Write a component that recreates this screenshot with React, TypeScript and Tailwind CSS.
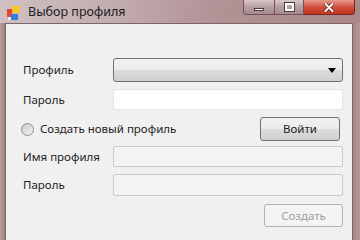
import { useState } from "react";

const AppIcon = () => (
  <svg width="16" height="16" viewBox="0 0 16 16">
    <rect x="1" y="4" width="5" height="8" fill="#e8412c" />
    <rect x="6" y="1" width="8" height="7" fill="#f7c52a" />
    <rect x="5" y="9" width="7" height="6" fill="#2f7fe0" />
    <rect x="2" y="12" width="3" height="3" fill="#ffffff" opacity="0.7" />
  </svg>
);

const TitleBar = () => (
  <div className="relative h-[23px] flex items-center bg-[linear-gradient(100deg,#cfc0c2_0%,#c2aeb1_30%,#b39296_60%,#a9878a_100%)]">
    <div className="ml-[6px] mt-[2px]">
      <AppIcon />
    </div>
    <span className="ml-[6px] mt-[1px] text-[12.5px] text-[#1c1c1c]">
      Выбор профиля
    </span>
    <div className="absolute right-[5px] top-0 flex h-[15px]">
      <div className="w-[32px] h-full border border-[#6f5456] border-t-0 rounded-bl-[4px] bg-[linear-gradient(#d9c8ca,#b59ea1_50%,#a58a8d)] flex items-center justify-center">
        <div className="w-[10px] h-[3px] mt-[4px] bg-white border border-[#4a3a3b]" />
      </div>
      <div className="w-[29px] h-full border-b border-r border-[#6f5456] bg-[linear-gradient(#d9c8ca,#b59ea1_50%,#a58a8d)] flex items-center justify-center">
        <div className="w-[9px] h-[8px] border-2 border-white outline outline-1 outline-[#4a3a3b]" />
      </div>
      <div className="w-[51px] h-full border-b border-r border-[#6f2a22] rounded-br-[4px] bg-[linear-gradient(#e69a8c,#d0503e_50%,#c2321f)] flex items-center justify-center">
        <svg width="10" height="9" viewBox="0 0 10 9">
          <path d="M1.5 1 L8.5 8 M8.5 1 L1.5 8" stroke="#5a1a10" strokeWidth="3.4" strokeLinecap="round" />
          <path d="M1.5 1 L8.5 8 M8.5 1 L1.5 8" stroke="#ffffff" strokeWidth="2" strokeLinecap="round" />
        </svg>
      </div>
    </div>
  </div>
);

const TextBox = ({ disabled, tall }: { disabled?: boolean; tall?: boolean }) => (
  <div
    className={
      disabled
        ? "w-[230px] " + (tall ? "h-[22px]" : "h-[21px]") + " rounded-[2px] border border-[#c8c8c8] bg-[#f4f4f4]"
        : "w-[230px] h-[21px] border border-[#e2e3ea] bg-white"
    }
  />
);

export default function App() {
  const [create, setCreate] = useState(false);

  return (
    <div className="w-[360px] h-[240px] overflow-hidden flex flex-col bg-[#a8888b] font-['Noto_Sans',sans-serif] text-[11.5px] text-[#1e1e1e]">
      <TitleBar />
      <div className="flex flex-1">
        <div className="w-[5px] bg-[linear-gradient(90deg,#b89a9d,#a08083)]" />
        <div className="flex-1 bg-[#f0f0f0] border-l border-t border-r border-[#7d6466] pl-[17px] pt-[34px]">
          <div className="flex items-center h-[24px]">
            <span className="w-[90px]">Профиль</span>
            <div className="relative w-[230px] h-[24px] rounded-[3px] border border-[#707070] bg-[linear-gradient(#f2f2f2,#ebebeb_50%,#dddddd_51%,#cfcfcf)]">
              <div className="absolute right-[6px] top-[9px] w-0 h-0 border-l-[4px] border-r-[4px] border-t-[5px] border-l-transparent border-r-transparent border-t-black" />
            </div>
          </div>
          <div className="flex items-center mt-[7px]">
            <span className="w-[90px]">Пароль</span>
            <TextBox />
          </div>
          <div className="flex items-center mt-[7px] h-[24px]">
            <button
              type="button"
              onClick={() => setCreate(!create)}
              className="flex items-center w-[239px] -ml-[2px]"
            >
              <span className="w-[13px] h-[13px] rounded-full border border-[#8e8f8f] bg-[linear-gradient(135deg,#cbcbcb,#f4f4f4)] flex items-center justify-center">
                {create && <span className="w-[5px] h-[5px] rounded-full bg-[#1f4f8f]" />}
              </span>
              <span className="ml-[6px]">Создать новый профиль</span>
            </button>
            <button
              type="button"
              className="w-[80px] h-[24px] rounded-[3px] border border-[#707070] bg-[linear-gradient(#f2f2f2,#ebebeb_50%,#dddddd_51%,#cfcfcf)] text-[#1e1e1e]"
            >
              Войти
            </button>
          </div>
          <div className="flex items-center mt-[5px]">
            <span className="w-[90px]">Имя профиля</span>
            <TextBox disabled />
          </div>
          <div className="flex items-center mt-[7px]">
            <span className="w-[90px]">Пароль</span>
            <TextBox disabled tall />
          </div>
          <div className="flex justify-end w-[320px] mt-[8px]">
            <button
              type="button"
              disabled
              className="w-[79px] h-[23px] rounded-[3px] border border-[#adb2b5] bg-[#f4f4f4] text-[#a0a0a0]"
            >
              Создать
            </button>
          </div>
        </div>
        <div className="w-[7px] bg-[linear-gradient(90deg,#a68689,#b7999c)]" />
      </div>
    </div>
  );
}
